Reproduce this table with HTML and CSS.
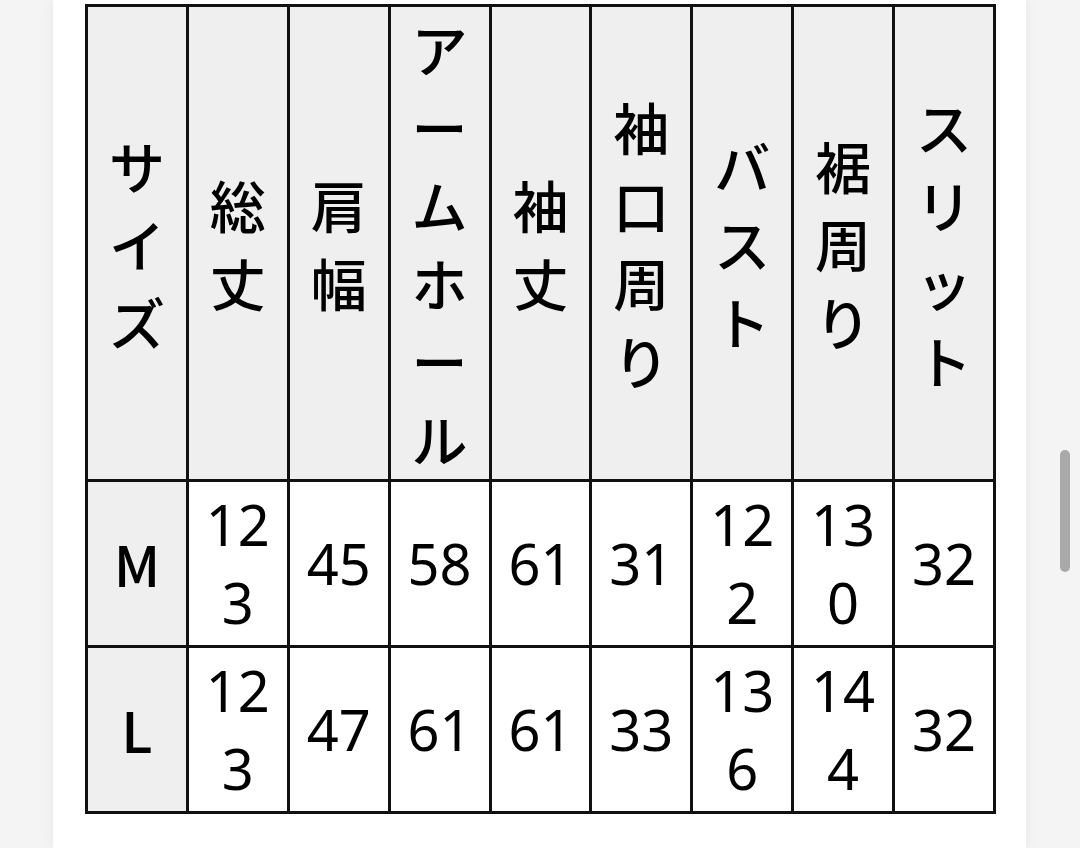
FILE: index.html
```html
<!DOCTYPE html>
<html lang="ja">
<head>
<meta charset="utf-8">
<link rel="stylesheet" href="styles.css">
</head>
<body>
<div class="page">
  <div class="card">
    <table class="size-table">
      <thead>
        <tr>
          <th>サイズ</th>
          <th>総丈</th>
          <th>肩幅</th>
          <th>アームホール</th>
          <th>袖丈</th>
          <th>袖口周り</th>
          <th>バスト</th>
          <th>裾周り</th>
          <th>スリット</th>
        </tr>
      </thead>
      <tbody>
        <tr>
          <th>M</th>
          <td>123</td>
          <td>45</td>
          <td>58</td>
          <td>61</td>
          <td>31</td>
          <td>122</td>
          <td>130</td>
          <td>32</td>
        </tr>
        <tr>
          <th>L</th>
          <td>123</td>
          <td>47</td>
          <td>61</td>
          <td>61</td>
          <td>33</td>
          <td>136</td>
          <td>144</td>
          <td>32</td>
        </tr>
      </tbody>
    </table>
  </div>
  <div class="scrollbar"></div>
</div>
</body>
</html>
```
FILE: styles.css
```css
html, body {
  margin: 0;
  padding: 0;
}
body {
  width: 1080px;
  height: 848px;
  overflow: hidden;
  background: #f4f4f4;
  font-family: "Noto Sans", "Noto Sans CJK JP", sans-serif;
  color: #000;
}
.page {
  position: relative;
  height: 848px;
  display: flex;
  justify-content: flex-start;
}
.card {
  margin-left: 53px;
  width: 973px;
  height: 848px;
  background: #fff;
  box-shadow: 0 0 14px rgba(0, 0, 0, 0.06);
  padding: 4px 0 0 32px;
  box-sizing: border-box;
}
.size-table {
  border-collapse: collapse;
  table-layout: fixed;
  width: 911px;
  font-size: 56px;
  line-height: 78px;
}
.size-table th,
.size-table td {
  border: 3px solid #111;
  padding: 3px 5px 4px;
  text-align: center;
  vertical-align: middle;
  word-break: break-all;
}
.size-table thead th {
  background: #efefef;
  font-family: "Noto Sans CJK JP", sans-serif;
  font-weight: 500;
  padding: 2px 5px;
}
.size-table tbody th {
  background: #efefef;
  font-family: "Noto Sans CJK JP", sans-serif;
  font-weight: 500;
}
.size-table td {
  background: #fff;
  font-weight: 400;
}
.scrollbar {
  position: absolute;
  left: 1060px;
  top: 450px;
  width: 10px;
  height: 122px;
  border-radius: 5px;
  background: #a9a9a9;
}
```
